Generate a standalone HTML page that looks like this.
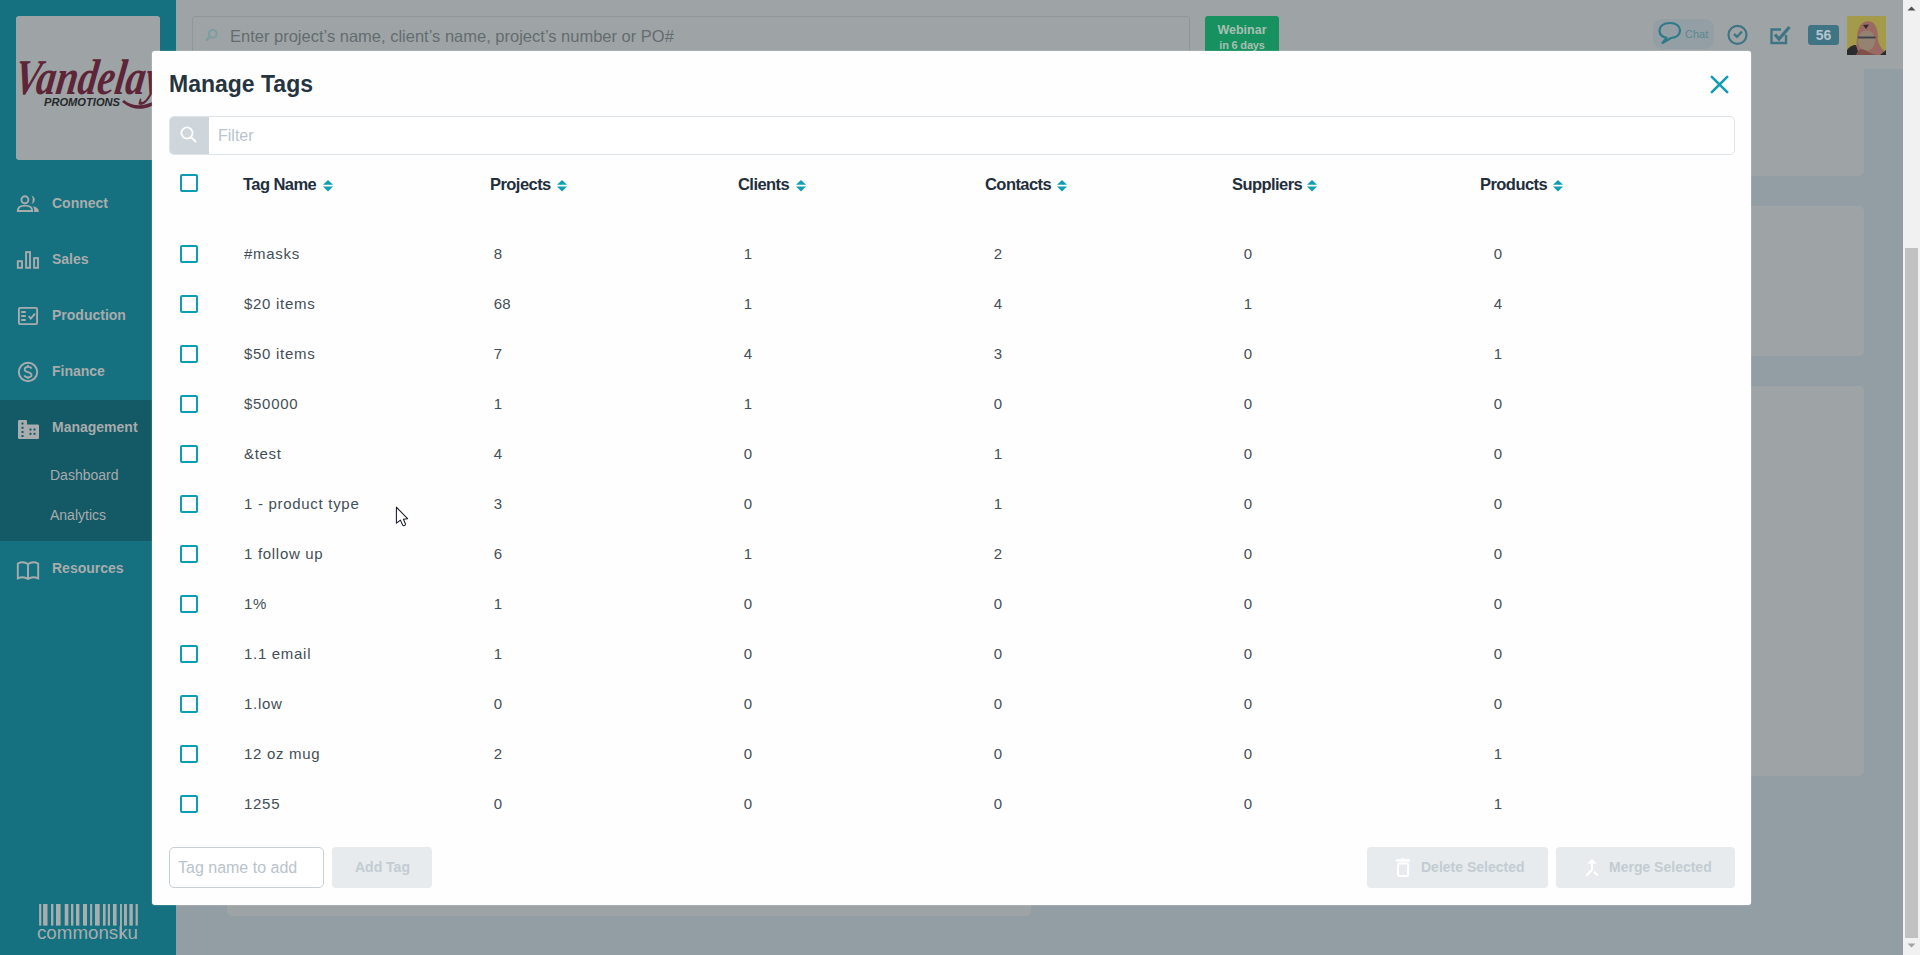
<!DOCTYPE html>
<html><head><meta charset="utf-8">
<style>
*{box-sizing:border-box;margin:0;padding:0}
html,body{width:1920px;height:955px;overflow:hidden;font-family:"Liberation Sans",sans-serif}
body{background:#939ea4;position:relative}
.abs{position:absolute}
#side{left:0;top:0;width:176px;height:955px;background:#15707f}
#logo{left:16px;top:16px;width:144px;height:144px;background:#9ea4a6;border-radius:3px;overflow:hidden}
#mgmt{left:0;top:400px;width:176px;height:141px;background:#135966}
.nav{position:absolute;left:52px;font-size:14px;font-weight:bold;color:#a9acad;line-height:16px;white-space:nowrap}
.sub{position:absolute;left:50px;font-size:14px;color:#a9acad;line-height:16px}
.ico{position:absolute}
#topbar{left:176px;top:0;width:1727px;height:69px;background:#9ea4a6}
#search{left:192px;top:16px;width:998px;height:40px;border:1px solid #8f969a;border-radius:3px;background:#9ea4a6}
#search span{position:absolute;left:37px;top:9.5px;font-size:16.5px;color:#656c70;white-space:nowrap}
#webinar{left:1205px;top:16px;width:74px;height:40px;background:#16915f;border-radius:3px;color:#a9bfb3;font-weight:bold;text-align:center}
.card{position:absolute;background:#9ea4a6;border-radius:5px}
#sb{left:1903px;top:0;width:17px;height:955px;background:#f1f1f1}
#thumb{left:1905px;top:248px;width:13px;height:690px;background:#c1c1c1}
#modal{left:152px;top:51px;width:1599px;height:854px;background:#fefefe;border-radius:3px;box-shadow:0 0 1.5px rgba(255,255,255,0.6)}
#title{left:17px;top:19px;font-size:23px;font-weight:bold;color:#263440;line-height:28px}
#filter{left:17px;top:65px;width:1566px;height:39px;border:1.5px solid #dde3e7;border-radius:5px;overflow:hidden;background:#fff}
#addon{left:0;top:0;width:39px;height:100%;background:#ced5db}
#filter .ph{position:absolute;left:48px;top:9.7px;font-size:16px;color:#b9c4cc}
.cb{position:absolute;left:28px;width:18px;height:18px;border:2px solid #0c9db3;border-radius:2px}
.row{position:absolute;left:0;width:1599px;height:50px}
.row .cb{top:17px}
.c0,.c1,.c2,.c3,.c4,.c5{position:absolute;top:16px;line-height:20px;font-size:15px;color:#434f57;white-space:nowrap}
.c0{left:92px;letter-spacing:0.7px}.c1{left:341.8px}.c2{left:591.8px}.c3{left:841.8px}.c4{left:1091.8px}.c5{left:1341.8px}
.th{position:absolute;top:122.5px;line-height:20px;font-size:16.5px;letter-spacing:-0.55px;font-weight:bold;color:#1f2f3d;white-space:nowrap}
.th svg{position:absolute;top:6.2px}
#tagin{left:17px;top:796px;width:155px;height:41px;border:1px solid #c7d0d7;border-radius:5px;background:#fff}
#tagin span{position:absolute;left:8px;top:11px;font-size:16px;color:#b9c3cb;white-space:nowrap}
.btn{position:absolute;top:796px;height:41px;background:#e8ebed;border-radius:4px;color:#c3ccd3;font-weight:bold;font-size:14px;white-space:nowrap}
.btn span{position:absolute;top:12px}
</style></head>
<body>
<div id="side" class="abs">
  <div id="logo" class="abs">
    <svg width="144" height="144" viewBox="0 0 144 144">
      <text x="0" y="78" font-family="Liberation Serif" font-style="italic" font-weight="bold" font-size="50" fill="#5e2437" transform="translate(8,0) skewX(-8)" textLength="148" lengthAdjust="spacingAndGlyphs">Vandelay</text>
      <path d="M108 84 C118 92 130 90 140 84 L142 86 C132 94 118 96 106 86Z" fill="#5e2437"/>
      <text x="28" y="90" font-family="Liberation Sans" font-style="italic" font-weight="bold" font-size="10" fill="#25282a" textLength="76" lengthAdjust="spacingAndGlyphs">PROMOTIONS</text>
    </svg>
  </div>
</div>
<div id="mgmt" class="abs"></div>
<!-- nav icons -->
<svg class="ico" style="left:0;top:0" width="176" height="955" fill="none" stroke="#a9acad" stroke-width="1.9">
  <circle cx="24.9" cy="199.8" r="3.5"/>
  <path d="M17.8 211 C17.8 206.8 21 205.6 25 205.6 C29 205.6 32.2 206.8 32.2 211 Z"/>
  <path d="M30.6 195.6 A4.2 4.2 0 0 1 30.6 204 A2.1 4.2 0 0 0 30.6 195.6 Z" fill="#a9acad" stroke="none"/>
  <path d="M33 206.2 C36.8 206.8 38.9 208.8 38.9 211.9 L34.2 211.9 C34.3 209.6 34 207.8 33 206.2 Z" fill="#a9acad" stroke="none"/>
  <rect x="17.8" y="261.2" width="4.2" height="6.6"/>
  <rect x="26.1" y="252.1" width="3.9" height="15.7"/>
  <rect x="34.1" y="258.1" width="3.9" height="9.7"/>
  <rect x="18.9" y="307.9" width="18.2" height="16.2" rx="1.2"/>
  <path d="M21.2 312H25.8 M21.2 316H25.8 M21.2 320H25.8"/>
  <path d="M28.6 316.2 L30.8 318.6 L35 313.6"/>
  <circle cx="28" cy="372" r="9.2"/>
  <path d="M31.5 368.6 C31 367.2 29.6 366.8 28 366.8 C26 366.8 24.6 367.8 24.6 369.4 C24.6 373 31.6 371.2 31.6 375 C31.6 376.6 30 377.3 28 377.3 C26.3 377.3 24.8 376.8 24.3 375.4 M28 365V366.8 M28 377.3V379" stroke-width="1.7"/>
  <path d="M17.8 563.5 C21 562 25 562 28 564 C31 562 35 562 38.2 563.5 V578.5 C35 577 31 577 28 579 C25 577 21 577 17.8 578.5 Z M28 564V579"/>
</svg>
<svg class="ico" style="left:18px;top:420px" width="21" height="19" viewBox="0 0 21 19">
  <path d="M0 1.2 Q0 0 1.2 0 H7.8 Q9 0 9 1.2 V4.5 H19.8 Q21 4.5 21 5.7 V17.8 Q21 19 19.8 19 H1.2 Q0 19 0 17.8Z" fill="#a9acad"/>
  <rect x="3.5" y="2.5" width="2" height="2" fill="#135966"/><rect x="3.5" y="6.8" width="2" height="2" fill="#135966"/><rect x="3.5" y="11" width="2" height="2" fill="#135966"/><rect x="3.5" y="15" width="2" height="2" fill="#135966"/>
  <rect x="11.5" y="8.5" width="2" height="2" fill="#135966"/><rect x="15.5" y="8.5" width="2" height="2" fill="#135966"/><rect x="11.5" y="12.8" width="2" height="2" fill="#135966"/><rect x="15.5" y="12.8" width="2" height="2" fill="#135966"/>
</svg>
<div class="nav" style="top:195px">Connect</div>
<div class="nav" style="top:251px">Sales</div>
<div class="nav" style="top:307px">Production</div>
<div class="nav" style="top:363px">Finance</div>
<div class="nav" style="top:419px">Management</div>
<div class="sub" style="top:467px">Dashboard</div>
<div class="sub" style="top:507px">Analytics</div>
<div class="nav" style="top:560px">Resources</div>
<svg class="ico" style="left:0;top:0" width="176" height="955" fill="#a9acad"><rect x="39.1" y="904" width="2.2" height="21.6"/><rect x="43.1" y="904" width="4.4" height="21.6"/><rect x="51.0" y="904" width="2.4" height="21.6"/><rect x="56.0" y="904" width="4.6" height="21.6"/><rect x="64.7" y="904" width="3.7" height="21.6"/><rect x="71.0" y="904" width="2.4" height="21.6"/><rect x="76.0" y="904" width="3.4" height="21.6"/><rect x="83.0" y="904" width="4.0" height="21.6"/><rect x="90.1" y="904" width="2.1" height="21.6"/><rect x="95.0" y="904" width="4.7" height="21.6"/><rect x="103.0" y="904" width="2.6" height="21.6"/><rect x="107.8" y="904" width="2.2" height="21.6"/><rect x="113.0" y="904" width="3.6" height="21.6"/><rect x="124.0" y="904" width="2.9" height="21.6"/><rect x="129.4" y="904" width="3.4" height="21.6"/><rect x="135.6" y="904" width="2.2" height="21.6"/><rect x="120" y="904" width="1.9" height="34.5"/>
  <text x="37" y="938.5" font-family="Liberation Sans" font-size="19" fill="#a9acad" textLength="101" lengthAdjust="spacingAndGlyphs">commonsku</text>
</svg>

<div id="topbar" class="abs"></div>
<div class="card" style="left:1000px;top:40px;width:864px;height:136px"></div>
<div class="card" style="left:1000px;top:206px;width:864px;height:150px"></div>
<div class="card" style="left:1000px;top:386px;width:864px;height:390px"></div>
<div class="card" style="left:227px;top:700px;width:804px;height:216px"></div>
<div id="search" class="abs">
  <svg class="ico" style="left:12px;top:12px" width="14" height="14" viewBox="0 0 14 14"><circle cx="7.8" cy="4.8" r="3.9" fill="none" stroke="#7f9ca0" stroke-width="2"/><path d="M5 7.6L1.6 10.9" stroke="#7f9ca0" stroke-width="2.4" stroke-linecap="round"/></svg>
  <span>Enter project’s name, client’s name, project’s number or PO#</span>
</div>
<div id="webinar" class="abs">
  <div style="position:absolute;left:0;width:74px;top:7px;font-size:12.5px;line-height:14px">Webinar</div>
  <div style="position:absolute;left:0;width:74px;top:22px;font-size:11px;letter-spacing:-0.2px;line-height:14px">in 6 days</div>
</div>
<div class="abs" style="left:1653px;top:19px;width:61px;height:30px;background:#939fa5;border-radius:9px"></div>
<svg class="ico" style="left:1650px;top:15px" width="160" height="45" fill="none">
  <path d="M20 8 C13 8 9.5 11.5 9.5 15.5 C9.5 19.5 12.5 22 16.5 22.8 L12.5 28 L21 23 C26.5 22.5 30 19.5 30 15.5 C30 11.5 26.5 8 20 8Z" stroke="#2f7a88" stroke-width="2.2" stroke-linejoin="round"/>
  <text x="35" y="23" font-family="Liberation Sans" font-size="11" fill="#5c8893">Chat</text>
  <circle cx="87.5" cy="19.8" r="9" stroke="#3f7485" stroke-width="2.2"/>
  <path d="M84 19 L87 21.8 L92 16.5" stroke="#3f7485" stroke-width="2.4"/>
  <path d="M131 14.5 H121.5 V28 H136 V20" stroke="#3f7485" stroke-width="2.4"/>
  <path d="M125 19.5 L129 24 L139.5 12" stroke="#3f7485" stroke-width="3.2"/>
</svg>
<div class="abs" style="left:1808px;top:25px;width:31px;height:20px;background:#3f7485;border-radius:3px;color:#b4c4cb;font-weight:bold;font-size:14px;line-height:20px;text-align:center">56</div>
<svg class="ico" style="left:1847px;top:16px" width="39" height="39" viewBox="0 0 39 39">
  <rect width="39" height="39" fill="#a39a4a"/>
  <path d="M9 39 C10 30 9 18 12 12 C14 6 20 4 25 6 C30 9 31 16 31 24 C32 30 36 34 39 36 V39Z" fill="#9a6a62"/>
  <path d="M16 9 L22 8.5 L19 13Z" fill="#2e2b2e"/>
  <ellipse cx="19.5" cy="24.5" rx="8.6" ry="10.3" fill="#948370"/>
  <path d="M11 21.5 H28.5" stroke="#3d424b" stroke-width="1.9"/>
  <path d="M0 39 V34 C2 31 5 29 9 29 L12 39Z" fill="#2b2a2d"/>
  <path d="M9 39 C12 31 16 33 21 36 C25 38 28 39 30 39Z" fill="#7e5049"/>
  <path d="M33 39 L39 34 V39Z" fill="#2b2a2d"/>
</svg>
<div id="sb" class="abs">
  <svg style="position:absolute;left:4px;top:5px" width="9" height="6"><path d="M0.5 5.5L4.5 1.5L8.5 5.5Z" fill="#505050"/></svg>
  <svg style="position:absolute;left:4px;top:943px" width="9" height="6"><path d="M0.5 0.5L4.5 4.5L8.5 0.5Z" fill="#a3a3a3"/></svg>
</div>
<div id="thumb" class="abs"></div>

<div id="modal" class="abs">
  <div id="title" class="abs">Manage Tags</div>
  <svg class="ico" style="left:1557px;top:22.5px" width="21" height="21" viewBox="0 0 21 21"><path d="M2.8 2.8L18.2 18.2M18.2 2.8L2.8 18.2" stroke="#0f9db3" stroke-width="2.6" stroke-linecap="round"/></svg>
  <div id="filter" class="abs"><div id="addon" class="abs">
    <svg class="ico" style="left:9px;top:8.4px" width="20" height="20" viewBox="0 0 20 20"><circle cx="8" cy="8" r="5.6" fill="none" stroke="#fff" stroke-width="1.8"/><path d="M12 12L16.5 16.5" stroke="#fff" stroke-width="2" stroke-linecap="round"/></svg>
  </div><span class="ph">Filter</span></div>
<div class="cb" style="top:123px"></div>
<div class="th" style="left:91px">Tag Name<svg style="left:80px" width="10" height="12" viewBox="0 0 10 12"><path d="M5 0L10 4.8H0Z M0 6.5H10L5 11.5Z" fill="#0f9fb4"/></svg></div>
<div class="th" style="left:338px">Projects<svg style="left:67px" width="10" height="12" viewBox="0 0 10 12"><path d="M5 0L10 4.8H0Z M0 6.5H10L5 11.5Z" fill="#0f9fb4"/></svg></div>
<div class="th" style="left:586px">Clients<svg style="left:58px" width="10" height="12" viewBox="0 0 10 12"><path d="M5 0L10 4.8H0Z M0 6.5H10L5 11.5Z" fill="#0f9fb4"/></svg></div>
<div class="th" style="left:833px">Contacts<svg style="left:72px" width="10" height="12" viewBox="0 0 10 12"><path d="M5 0L10 4.8H0Z M0 6.5H10L5 11.5Z" fill="#0f9fb4"/></svg></div>
<div class="th" style="left:1080px">Suppliers<svg style="left:75px" width="10" height="12" viewBox="0 0 10 12"><path d="M5 0L10 4.8H0Z M0 6.5H10L5 11.5Z" fill="#0f9fb4"/></svg></div>
<div class="th" style="left:1328px">Products<svg style="left:73px" width="10" height="12" viewBox="0 0 10 12"><path d="M5 0L10 4.8H0Z M0 6.5H10L5 11.5Z" fill="#0f9fb4"/></svg></div>

<div class="row" style="top:177px"><div class="cb"></div><div class="c0">#masks</div><div class="c1">8</div><div class="c2">1</div><div class="c3">2</div><div class="c4">0</div><div class="c5">0</div></div>
<div class="row" style="top:227px"><div class="cb"></div><div class="c0">$20 items</div><div class="c1">68</div><div class="c2">1</div><div class="c3">4</div><div class="c4">1</div><div class="c5">4</div></div>
<div class="row" style="top:277px"><div class="cb"></div><div class="c0">$50 items</div><div class="c1">7</div><div class="c2">4</div><div class="c3">3</div><div class="c4">0</div><div class="c5">1</div></div>
<div class="row" style="top:327px"><div class="cb"></div><div class="c0">$50000</div><div class="c1">1</div><div class="c2">1</div><div class="c3">0</div><div class="c4">0</div><div class="c5">0</div></div>
<div class="row" style="top:377px"><div class="cb"></div><div class="c0">&amp;test</div><div class="c1">4</div><div class="c2">0</div><div class="c3">1</div><div class="c4">0</div><div class="c5">0</div></div>
<div class="row" style="top:427px"><div class="cb"></div><div class="c0">1 - product type</div><div class="c1">3</div><div class="c2">0</div><div class="c3">1</div><div class="c4">0</div><div class="c5">0</div></div>
<div class="row" style="top:477px"><div class="cb"></div><div class="c0">1 follow up</div><div class="c1">6</div><div class="c2">1</div><div class="c3">2</div><div class="c4">0</div><div class="c5">0</div></div>
<div class="row" style="top:527px"><div class="cb"></div><div class="c0">1%</div><div class="c1">1</div><div class="c2">0</div><div class="c3">0</div><div class="c4">0</div><div class="c5">0</div></div>
<div class="row" style="top:577px"><div class="cb"></div><div class="c0">1.1 email</div><div class="c1">1</div><div class="c2">0</div><div class="c3">0</div><div class="c4">0</div><div class="c5">0</div></div>
<div class="row" style="top:627px"><div class="cb"></div><div class="c0">1.low</div><div class="c1">0</div><div class="c2">0</div><div class="c3">0</div><div class="c4">0</div><div class="c5">0</div></div>
<div class="row" style="top:677px"><div class="cb"></div><div class="c0">12 oz mug</div><div class="c1">2</div><div class="c2">0</div><div class="c3">0</div><div class="c4">0</div><div class="c5">1</div></div>
<div class="row" style="top:727px"><div class="cb"></div><div class="c0">1255</div><div class="c1">0</div><div class="c2">0</div><div class="c3">0</div><div class="c4">0</div><div class="c5">1</div></div>
  <div id="tagin" class="abs"><span>Tag name to add</span></div>
  <div class="btn" style="left:180px;width:100px"><span style="left:23px">Add Tag</span></div>
  <div class="btn" style="left:1215px;width:181px">
    <svg class="ico" style="left:29px;top:11px" width="16" height="20" viewBox="0 0 16 20"><path d="M0 1.9 Q0 1 1 1 H4.6 Q7 -0.3 9.4 1 H13 Q14 1 14 1.9 V3.7 H0Z" fill="#fff"/><rect x="2.1" y="5.6" width="10" height="12.4" rx="1.4" fill="none" stroke="#fff" stroke-width="2"/></svg>
    <span style="left:54px">Delete Selected</span></div>
  <div class="btn" style="left:1404px;width:179px">
    <svg class="ico" style="left:29px;top:11px" width="16" height="20" viewBox="0 0 16 20"><path d="M7 1 L11.6 5.6 H2.4 Z" fill="#fff"/><path d="M7 5 V11.8 L1.7 17.3 M9.4 14.2 L12.3 16.9" fill="none" stroke="#fff" stroke-width="2" stroke-linecap="round"/></svg>
    <span style="left:53px">Merge Selected</span></div>
</div>
<svg class="ico" style="left:395px;top:506px" width="14" height="22" viewBox="0 0 14 22">
  <path d="M1.4 1.2 V17.2 L5.4 14.1 L7.6 19 Q8.3 20 9.4 19.5 L10 19.1 Q10.7 18.4 10.3 17.5 L8.4 13.3 L12.6 12.7 Z" fill="#fff" stroke="#161a26" stroke-width="1.05" stroke-linejoin="round"/>
</svg>
</body></html>
